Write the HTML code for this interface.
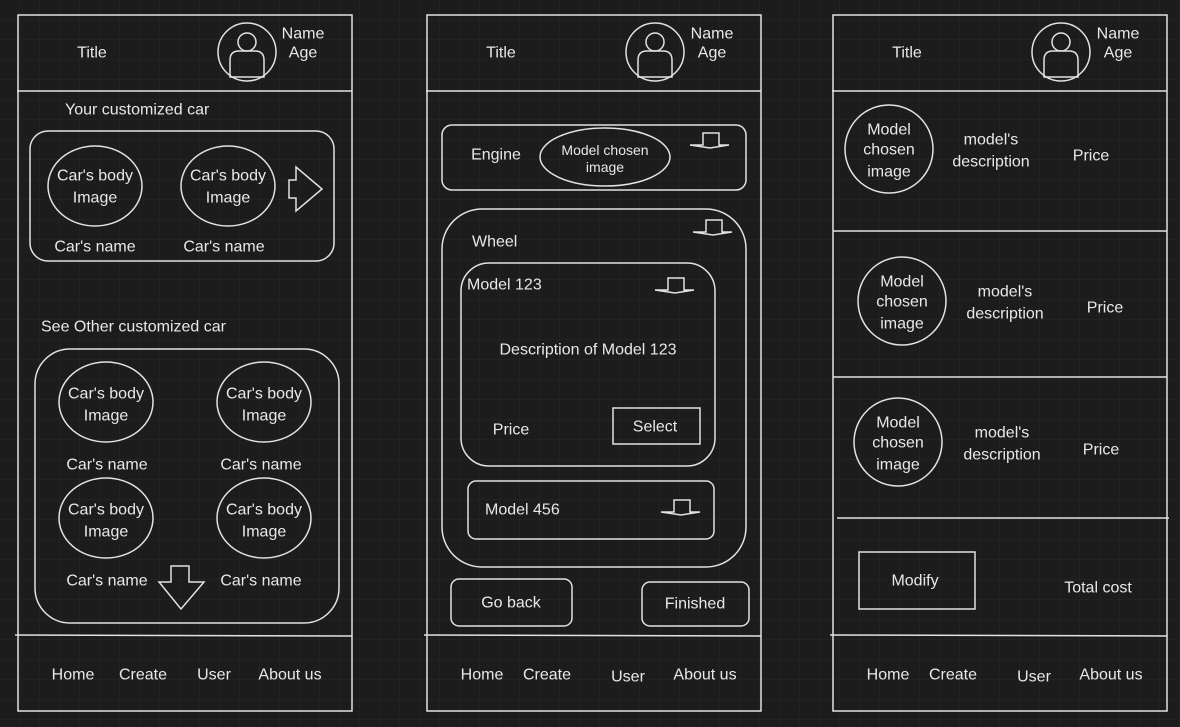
<!DOCTYPE html>
<html><head><meta charset="utf-8"><style>
html,body{margin:0;padding:0;background:#1c1c1c;}
svg{display:block;}
text{font-family:"Liberation Sans",sans-serif;font-size:16px;fill:#e8e8e8;dominant-baseline:central;text-anchor:middle;transform:translateY(1px);}
.l{text-anchor:start;}
.s{font-size:14px;}
.k{fill:none;stroke:#e2e2e2;stroke-width:1.5;}
</style></head><body>
<svg width="1180" height="727" viewBox="0 0 1180 727" xmlns="http://www.w3.org/2000/svg">
<defs>
<pattern id="g" width="20" height="20" patternUnits="userSpaceOnUse">
<path d="M20 0V20M0 20H20" stroke="#272727" stroke-width="1" fill="none"/>
</pattern>
<g id="av">
<circle cx="0" cy="0" r="29" class="k"/>
<circle cx="0" cy="-10" r="9" class="k"/>
<path d="M-17,25 V8 Q-17,-1 -8,-1 H8 Q17,-1 17,8 V25 Z" class="k"/>
</g>
<path id="da" d="M0,12 H13 V0 H29 V12 H39 L20,15 Z" class="k"/>
</defs>
<rect width="1180" height="727" fill="#1c1c1c"/>
<rect width="1180" height="727" fill="url(#g)"/>

<!-- Panel 1 -->
<rect x="18" y="15" width="334" height="696" fill="#121212" class="k"/>
<line x1="17" y1="91" x2="352" y2="91" class="k"/>
<use href="#av" x="247" y="52"/>
<text x="303" y="33">Name</text><text x="303" y="52">Age</text>
<text x="92" y="52">Title</text>
<text x="65" y="109" class="l">Your customized car</text>
<rect x="30" y="131" width="304" height="130" rx="18" class="k"/>
<ellipse cx="95" cy="186" rx="47" ry="40" class="k"/>
<ellipse cx="228" cy="186" rx="47" ry="40" class="k"/>
<text x="95" y="175">Car's body</text><text x="95" y="197">Image</text>
<text x="228" y="175">Car's body</text><text x="228" y="197">Image</text>
<text x="95" y="246">Car's name</text><text x="224" y="246">Car's name</text>
<path d="M289,180 L296,180 L296,167 L322,189 L296,211 L296,198 L289,198 Z" class="k"/>
<text x="41" y="326" class="l">See Other customized car</text>
<rect x="35" y="349" width="304" height="274" rx="35" class="k"/>
<ellipse cx="106" cy="402" rx="47" ry="40" class="k"/>
<ellipse cx="264" cy="402" rx="47" ry="40" class="k"/>
<ellipse cx="106" cy="518" rx="47" ry="40" class="k"/>
<ellipse cx="264" cy="518" rx="47" ry="40" class="k"/>
<text x="106" y="393">Car's body</text><text x="106" y="415">Image</text>
<text x="264" y="393">Car's body</text><text x="264" y="415">Image</text>
<text x="106" y="509">Car's body</text><text x="106" y="531">Image</text>
<text x="264" y="509">Car's body</text><text x="264" y="531">Image</text>
<text x="107" y="464">Car's name</text><text x="261" y="464">Car's name</text>
<text x="107" y="580">Car's name</text><text x="261" y="580">Car's name</text>
<path d="M171,566 L189,566 L189,582 L204,582 L181,609 L159,582 L171,582 Z" class="k"/>
<line x1="15" y1="635" x2="352" y2="636" class="k"/>
<text x="73" y="674">Home</text><text x="143" y="674">Create</text><text x="214" y="674">User</text><text x="290" y="674">About us</text>

<!-- Panel 2 -->
<rect x="427" y="15" width="334" height="696" fill="#121212" class="k"/>
<line x1="426" y1="91" x2="761" y2="91" class="k"/>
<use href="#av" x="655" y="52"/>
<text x="712" y="33">Name</text><text x="712" y="52">Age</text>
<text x="501" y="52">Title</text>
<rect x="442" y="125" width="304" height="65" rx="10" class="k"/>
<text x="496" y="154">Engine</text>
<ellipse cx="605" cy="157" rx="65" ry="29" class="k"/>
<text x="605" y="149" class="s">Model chosen</text><text x="605" y="166" class="s">image</text>
<use href="#da" x="690" y="133"/>
<rect x="442" y="209" width="304" height="358" rx="40" class="k"/>
<text x="472" y="241" class="l">Wheel</text>
<use href="#da" x="693" y="220"/>
<rect x="461" y="263" width="254" height="203" rx="28" class="k"/>
<text x="467" y="284" class="l">Model 123</text>
<use href="#da" x="655" y="278"/>
<text x="588" y="349">Description of Model 123</text>
<text x="511" y="429">Price</text>
<rect x="613" y="408" width="87" height="36" class="k"/>
<text x="655" y="426">Select</text>
<rect x="468" y="481" width="246" height="58" rx="8" class="k"/>
<text x="485" y="509" class="l">Model 456</text>
<use href="#da" x="661" y="500"/>
<rect x="451" y="579" width="121" height="47" rx="8" class="k"/>
<text x="511" y="602">Go back</text>
<rect x="642" y="582" width="107" height="44" rx="8" class="k"/>
<text x="695" y="603">Finished</text>
<line x1="424" y1="635" x2="761" y2="636" class="k"/>
<text x="482" y="674">Home</text><text x="547" y="674">Create</text><text x="628" y="676">User</text><text x="705" y="674">About us</text>

<!-- Panel 3 -->
<rect x="833" y="15" width="334" height="696" fill="#121212" class="k"/>
<line x1="832" y1="91" x2="1167" y2="91" class="k"/>
<use href="#av" x="1061" y="52"/>
<text x="1118" y="33">Name</text><text x="1118" y="52">Age</text>
<text x="907" y="52">Title</text>
<circle cx="889" cy="149" r="44" class="k"/>
<text x="889" y="129">Model</text><text x="889" y="149">chosen</text><text x="889" y="171">image</text>
<text x="991" y="139">model's</text><text x="991" y="161">description</text>
<text x="1091" y="155">Price</text>
<line x1="833" y1="231" x2="1167" y2="231" class="k"/>
<circle cx="902" cy="301" r="44" class="k"/>
<text x="902" y="281">Model</text><text x="902" y="301">chosen</text><text x="902" y="323">image</text>
<text x="1005" y="291">model's</text><text x="1005" y="313">description</text>
<text x="1105" y="307">Price</text>
<line x1="833" y1="377" x2="1167" y2="377" class="k"/>
<circle cx="898" cy="442" r="44" class="k"/>
<text x="898" y="422">Model</text><text x="898" y="442">chosen</text><text x="898" y="464">image</text>
<text x="1002" y="432">model's</text><text x="1002" y="454">description</text>
<text x="1101" y="449">Price</text>
<line x1="837" y1="518" x2="1169" y2="518" class="k"/>
<rect x="859" y="552" width="116" height="57" class="k"/>
<text x="915" y="580">Modify</text>
<text x="1098" y="587">Total cost</text>
<line x1="830" y1="635" x2="1167" y2="636" class="k"/>
<text x="888" y="674">Home</text><text x="953" y="674">Create</text><text x="1034" y="676">User</text><text x="1111" y="674">About us</text>
</svg>
</body></html>
